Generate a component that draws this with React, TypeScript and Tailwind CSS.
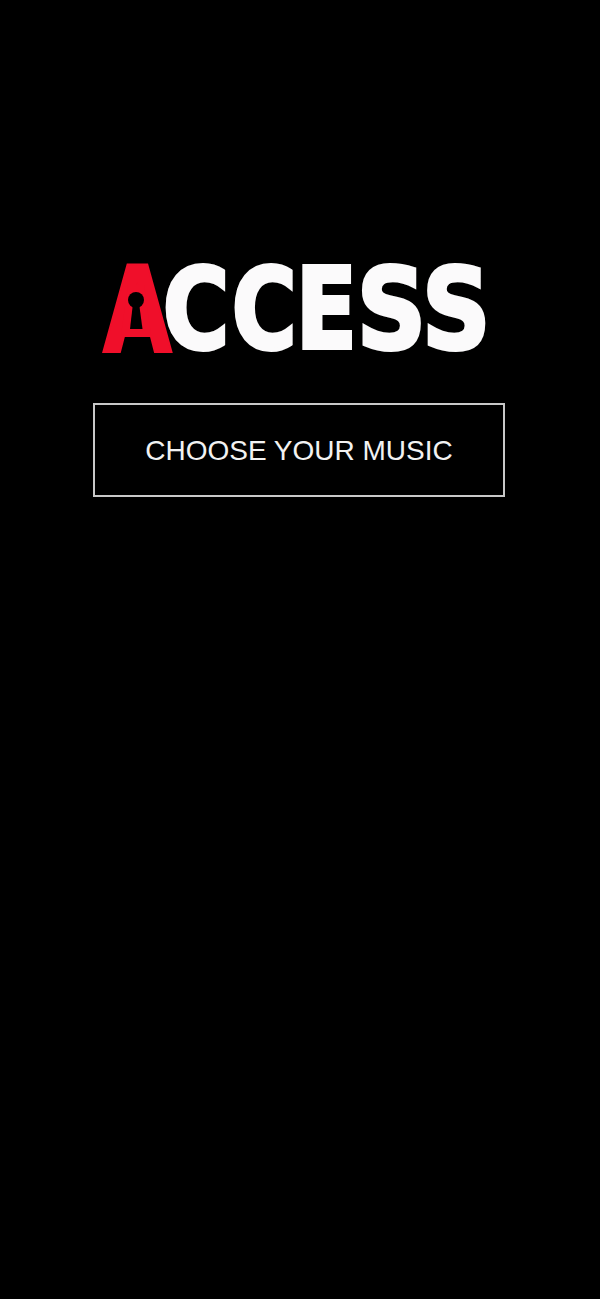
const letterClass =
  "flex h-[91px] shrink-0 items-center justify-center font-['DejaVu_Sans',sans-serif] text-[112px] leading-none font-bold"
const white = "text-[#fbfafb] [-webkit-text-stroke:4px_#fbfafb]"

function Logo() {
  return (
    <div className="relative flex h-[91px] w-[381px]" aria-label="Access">
      <span className={`${letterClass} w-[64px] text-[#f00f2a]`}>
        <span className="inline-block translate-y-[1px] scale-x-[0.8] scale-y-[1.07] [-webkit-text-stroke:2px_#f00f2a]">A</span>
      </span>
      <span className={`${letterClass} w-[55px] ${white}`}>
        <span className="inline-block scale-x-[0.81]">C</span>
      </span>
      <span className={`${letterClass} ml-[10px] w-[61px] ${white}`}>
        <span className="inline-block scale-x-[0.79]">C</span>
      </span>
      <span className={`${letterClass} ml-[5px] w-[53px] ${white}`}>
        <span className="inline-block scale-x-[0.8]">E</span>
      </span>
      <span className={`${letterClass} ml-[8px] w-[60px] ${white}`}>
        <span className="inline-block scale-x-[0.86]">S</span>
      </span>
      <span className={`${letterClass} ml-[6px] w-[59px] ${white}`}>
        <span className="inline-block scale-x-[0.85]">S</span>
      </span>
      {/* keyhole sits over the A's counter */}
      <svg className="absolute top-[22px] left-[11px]" width="40" height="56" viewBox="0 0 40 56">
        <path d="M12 0 L28 0 L35 50 L5 50 Z" fill="#f00f2a" />
        <circle cx="20" cy="15" r="8" fill="#000" />
        <path d="M17 18 L23 18 L26.5 44 L14 44 Z" fill="#000" />
      </svg>
    </div>
  )
}

export default function App() {
  return (
    <div className="flex h-[1299px] w-full flex-col bg-black pt-[263px] font-['Liberation_Sans',sans-serif]">
      <div className="pl-[105px]">
        <Logo />
      </div>
      <button className="mt-[49px] ml-[93px] flex h-[94px] w-[412px] items-center justify-center border-2 border-[#c8c8c8] bg-black pt-[2px] text-[28px] text-[#f2f2f2]">
        CHOOSE YOUR MUSIC
      </button>
    </div>
  )
}
